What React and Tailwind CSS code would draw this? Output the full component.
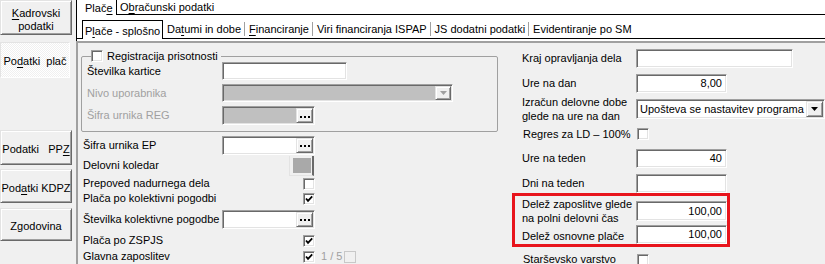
import React from "react";

const SUNKEN =
  "border border-t-[#a0a0a0] border-l-[#a0a0a0] border-b-white border-r-white shadow-[inset_1px_1px_0_#696969,inset_-1px_-1px_0_#e3e3e3] p-[1px]";
const RAISED =
  "border border-t-[#e3e3e3] border-l-[#e3e3e3] border-b-[#696969] border-r-[#696969] shadow-[inset_1px_1px_0_#ffffff,inset_-1px_-1px_0_#a0a0a0]";

function U({ children }) {
  return <span className="underline underline-offset-[2px]">{children}</span>;
}

function Check({ checked, disabled, className = "" }) {
  return (
    <span
      className={`inline-flex items-center justify-center w-[12px] h-[12px] shrink-0 border ${
        disabled
          ? "border-[#c8c8c8] bg-[#f0f0f0]"
          : "border-t-[#a0a0a0] border-l-[#a0a0a0] border-b-white border-r-white shadow-[inset_1px_1px_0_#696969,inset_-1px_-1px_0_#e3e3e3] bg-white"
      } ${className}`}
    >
      {checked && (
        <svg width="8" height="8" viewBox="0 0 8 8">
          <path d="M1 3.5 L3 5.8 L7.2 1.4" stroke="black" strokeWidth="1.8" fill="none" />
        </svg>
      )}
    </span>
  );
}

function Ellipsis() {
  return (
    <span className={`${RAISED} bg-[#f0f0f0] w-[17px] self-stretch flex items-center justify-center gap-[2px] pt-[2px]`}>
      <span className="w-[2px] h-[2px] bg-black" />
      <span className="w-[2px] h-[2px] bg-black" />
      <span className="w-[2px] h-[2px] bg-black" />
    </span>
  );
}

function Field({ className = "", disabled, value, ellipsis }) {
  return (
    <div className={`${SUNKEN} ${disabled ? "bg-[#c0c0c0]" : "bg-white"} flex shrink-0 ${className}`}>
      <div className="flex-1 flex items-center justify-end pr-[3px]">{value}</div>
      {ellipsis && <Ellipsis />}
    </div>
  );
}

function SideBtn({ className = "", children }) {
  return (
    <div className={`${RAISED} bg-[#f0f0f0] w-[72px] flex items-center justify-center text-center ${className}`}>
      {children}
    </div>
  );
}

function Tab({ children }) {
  return (
    <div className="h-[19px] border-b border-black flex items-center">
      <span className="pl-[4px] pr-[3px] border-r border-[#a0a0a0] leading-[14px] whitespace-nowrap">
        {children}
      </span>
    </div>
  );
}

export default function App() {
  return (
    <div className="w-[825px] h-[264px] overflow-hidden bg-[#f0f0f0] flex font-['Liberation_Sans',Arial,sans-serif] text-[11px] leading-[13px] text-black">
      {/* sidebar */}
      <aside className="w-[76px] shrink-0 flex flex-col">
        <SideBtn className="h-[35px] pt-[4px]">
          <span>
            <U>K</U>adrovski
            <br />
            podatki
          </span>
        </SideBtn>
        <div className="mt-[7px] w-[70px] h-[36px] flex items-center justify-center border border-[#e3e3e3] border-b-white border-r-white bg-[repeating-conic-gradient(#ffffff_0_25%,#f0f0f0_0_50%)] bg-[length:2px_2px] pt-[3px]">
          <span className="whitespace-pre">
            Po<U>d</U>atki  plač
          </span>
        </div>
        <SideBtn className="mt-[52px] h-[35px] pt-[4px]">
          <span className="whitespace-pre">
            Podatki   PP<U>Z</U>
          </span>
        </SideBtn>
        <SideBtn className="mt-[4px] h-[34px] pt-[4px]">
          <span>
            Pod<U>a</U>tki KDPZ
          </span>
        </SideBtn>
        <SideBtn className="mt-[5px] h-[33px] pt-[4px]">Zgodovina</SideBtn>
      </aside>

      {/* main */}
      <main className="flex-1 min-w-0 flex flex-col">
        <div className="bg-white border-l border-black">
          {/* first tab row */}
          <div className="h-[15px] flex">
            <div className="w-[40px] border-r border-black pl-[8px] flex items-center leading-[14px]">
              Plač<U>e</U>
            </div>
            <div className="flex-1 border-b border-black pl-[3px] flex items-center leading-[14px]">
              O<U>b</U>računski podatki
            </div>
          </div>
          {/* second tab row */}
          <div className="h-[24px] flex items-end">
            <div className="w-[5px] h-[19px] border-b border-black" />
            <div className="h-[19px] w-[81px] border-l border-t border-r border-black pl-[2px] flex items-center leading-[14px] pt-[1px]">
              P<U>l</U>ače - splošno
            </div>
            <Tab>
              Da<U>t</U>umi in dobe
            </Tab>
            <Tab>
              <U>F</U>inanciranje
            </Tab>
            <Tab>Viri financiranja ISPAP</Tab>
            <Tab>JS dodatni podatki</Tab>
            <div className="h-[19px] border-b border-black flex items-center pl-[4px] leading-[14px] whitespace-nowrap">
              Evidentiranje po SM
            </div>
            <div className="flex-1 h-[19px] border-b border-black" />
          </div>
          <div className="h-[2px]" />
        </div>

        {/* panel */}
        <div className="flex-1 border-l-2 border-t-2 border-[#a0a0a0] bg-[#f0f0f0] flex pl-[3px]">
          {/* left column */}
          <div className="w-[417px] shrink-0 flex flex-col">
            <fieldset className="mt-[7px] w-[417px] border border-[#a0a0a0] rounded-[2px] px-[5px] pb-[6px] pt-0 m-0 min-w-0">
              <legend className="ml-[4px] pr-[3px] flex items-center h-[12px]">
                <Check />
                <span className="ml-[4px] leading-[12px]">Registracija prisotnosti</span>
              </legend>
              <div className="h-[18px] flex items-center">
                <span className="w-[135px] shrink-0">Številka kartice</span>
                <Field className="w-[125px] h-[18px]" />
              </div>
              <div className="mt-[4px] h-[18px] flex items-center">
                <span className="w-[135px] shrink-0 text-[#a0a0a0]">Nivo uporabnika</span>
                <div className={`${SUNKEN} bg-[#c0c0c0] w-[231px] h-[18px] flex justify-end`}>
                  <span className={`${RAISED} bg-[#f0f0f0] w-[16px] self-stretch flex items-center justify-center`}>
                    <svg width="7" height="4" viewBox="0 0 7 4">
                      <path d="M0 0 H7 L3.5 4 Z" fill="#a0a0a0" />
                    </svg>
                  </span>
                </div>
              </div>
              <div className="mt-[4px] h-[19px] flex items-center">
                <span className="w-[135px] shrink-0 text-[#a0a0a0]">Šifra urnika REG</span>
                <Field className="w-[93px] h-[19px]" disabled ellipsis />
              </div>
            </fieldset>

            <div className="pl-[2px] flex flex-col">
              <div className="mt-[3px] h-[20px] flex items-center">
                <span className="w-[139px] shrink-0">Šifra urnika EP</span>
                <Field className="w-[93px] h-[19px]" ellipsis />
              </div>
              <div className="h-[21px] flex items-center">
                <span className="w-[139px] shrink-0">Delovni koledar</span>
                <span className="ml-[67px] w-[25px] h-[20px] border-l border-l-[#e3e3e3] border-r-2 border-r-[#696969] border-b border-b-[#e3e3e3] pl-[3px] pr-[1px] py-[2px] flex">
                  <span className="flex-1 bg-[#a9a9a9]" />
                </span>
              </div>
              <div className="h-[15px] flex items-center">
                <span className="w-[139px] shrink-0">Prepoved nadurnega dela</span>
                <Check className="ml-[81px]" />
              </div>
              <div className="h-[15px] flex items-center">
                <span className="w-[139px] shrink-0">Plača po kolektivni pogodbi</span>
                <Check className="ml-[81px]" checked />
              </div>
              <div className="mt-[2px] h-[22px] flex items-center">
                <span className="w-[139px] shrink-0">Številka kolektivne pogodbe</span>
                <Field className="w-[93px] h-[19px]" ellipsis />
              </div>
              <div className="mt-[3px] h-[15px] flex items-center">
                <span className="w-[139px] shrink-0">Plača po ZSPJS</span>
                <Check className="ml-[81px]" checked />
              </div>
              <div className="mt-[1px] h-[15px] flex items-center">
                <span className="w-[139px] shrink-0">Glavna zaposlitev</span>
                <Check className="ml-[81px]" checked />
                <span className="ml-[6px] text-[#a0a0a0]">1 / 5</span>
                <Check className="ml-[2px]" disabled />
              </div>
            </div>
          </div>

          {/* right column */}
          <div className="ml-[24px] flex flex-col pt-[6px]">
            <div className="h-[19px] flex items-center">
              <span className="w-[114px] shrink-0">Kraj opravljanja dela</span>
              <Field className="w-[157px] h-[19px]" />
            </div>
            <div className="mt-[6px] h-[19px] flex items-center">
              <span className="w-[114px] shrink-0">Ure na dan</span>
              <Field className="w-[91px] h-[19px]" value="8,00" />
            </div>
            <div className="mt-[4px] h-[24px] flex items-center">
              <span className="w-[114px] shrink-0 leading-[14px]">
                Izračun delovne dobe
                <br />
                glede na ure na dan
              </span>
              <div className={`${SUNKEN} bg-white w-[189px] h-[20px] flex shrink-0`}>
                <span className="flex-1 flex items-center pl-[2px] whitespace-nowrap">
                  Upošteva se nastavitev programa
                </span>
                <span className={`${RAISED} bg-[#f0f0f0] w-[17px] self-stretch flex items-center justify-center`}>
                  <svg width="7" height="4" viewBox="0 0 7 4">
                    <path d="M0 0 H7 L3.5 4 Z" fill="black" />
                  </svg>
                </span>
              </div>
            </div>
            <div className="mt-[6px] h-[14px] flex items-center">
              <span className="w-[114px] shrink-0 pl-[1px]">Regres za LD – 100%</span>
              <Check className="ml-[1px]" />
            </div>
            <div className="mt-[8px] h-[19px] flex items-center">
              <span className="w-[114px] shrink-0">Ure na teden</span>
              <Field className="w-[91px] h-[19px]" value="40" />
            </div>
            <div className="mt-[6px] h-[19px] flex items-center">
              <span className="w-[114px] shrink-0">Dni na teden</span>
              <Field className="w-[91px] h-[19px]" />
            </div>
            <div className="ml-[-10px] w-[218px] border-[3px] border-[#e8141c] pl-[7px] pt-[1px]">
              <div className="h-[28px] flex items-center">
                <span className="w-[114px] shrink-0 leading-[14px]">
                  Delež zaposlitve glede
                  <br />
                  na polni delovni čas
                </span>
                <Field className="w-[91px] h-[20px]" value="100,00" />
              </div>
              <div className="h-[19px] flex items-center">
                <span className="w-[114px] shrink-0 pt-[3px]">Delež osnovne plače</span>
                <Field className="w-[91px] h-[19px]" value="100,00" />
              </div>
            </div>
            <div className="mt-[6px] h-[13px] flex items-center">
              <span className="w-[114px] shrink-0 pl-[1px]">Starševsko varstvo</span>
              <Check className="ml-[1px]" />
            </div>
          </div>
        </div>
      </main>
    </div>
  );
}
